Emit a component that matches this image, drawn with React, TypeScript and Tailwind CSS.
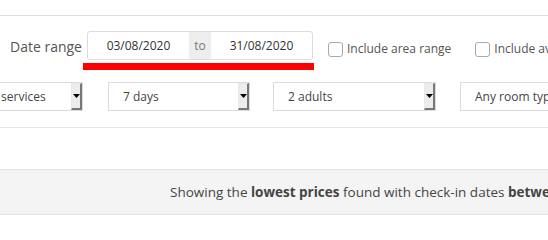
import React from "react";

const font = { fontFamily: '"Open Sans", "Liberation Sans", sans-serif' };

function SelectBox({ label, className }: { label: string; className: string }) {
    return (
        <div className={`flex h-[29px] shrink-0 items-stretch border border-[#dcdcdc] bg-white ${className}`}>
            <div className="flex min-w-0 flex-1 items-center overflow-hidden whitespace-nowrap pl-[14px] text-[12px] text-[#444]">
                {label}
            </div>
            <div className="flex w-[11px] shrink-0 items-center justify-center border-b-2 border-r-2 border-l border-t border-b-[#777] border-r-[#777] border-l-[#e8e8e8] border-t-[#e8e8e8] bg-[#ececec]">
                <svg width="7" height="4" viewBox="0 0 7 4">
                    <path d="M0 0h7L3.5 4z" fill="#000" />
                </svg>
            </div>
        </div>
    );
}

function Checkbox({ label }: { label: string }) {
    return (
        <label className="flex shrink-0 items-center whitespace-nowrap text-[12px] text-[#555]">
            <span className="mr-[4px] h-[15px] w-[15px] rounded-[3px] border border-[#aaa] bg-white" />
            {label}
        </label>
    );
}

export default function App() {
    return (
        <div className="h-[240px] w-[548px] overflow-hidden bg-white" style={font}>
            <div className="h-[16px] border-b border-[#dedede]" />

            {/* date range row */}
            <div className="flex items-start whitespace-nowrap pl-[10px] pt-[15px]">
                <span className="mt-[5px] shrink-0 text-[14px] text-[#555]">Date range</span>
                <div className="ml-[5px] flex shrink-0 flex-col">
                    <div className="flex h-[29px] w-[226px] overflow-hidden rounded-[3px] border border-[#dcdcdc] text-[12px] text-[#333]">
                        <div className="flex flex-1 items-center justify-center">03/08/2020</div>
                        <div className="flex w-[22px] items-center justify-center bg-[#eee] text-[#777]">to</div>
                        <div className="flex flex-1 items-center justify-center">31/08/2020</div>
                    </div>
                    <div className="-ml-[4px] mt-[3px] h-[7px] w-[231px] bg-[#ff0000]" />
                </div>
                <div className="ml-[14px] mt-[9px] flex shrink-0 gap-[24px]">
                    <Checkbox label="Include area range" />
                    <Checkbox label="Include availability" />
                </div>
            </div>

            {/* selects row */}
            <div className="mt-[12px] flex">
                <div className="-ml-[38px] flex shrink-0">
                    <SelectBox label="Any services" className="w-[121px]" />
                </div>
                <SelectBox label="7 days" className="ml-[25px] w-[142px]" />
                <SelectBox label="2 adults" className="ml-[23px] w-[163px]" />
                <SelectBox label="Any room type" className="ml-[24px] w-[160px]" />
            </div>

            <div className="mt-[16px] border-b border-[#e5e5e5]" />

            <div className="mt-[41px] flex h-[46px] items-center whitespace-nowrap border-y border-[#e2e2e2] bg-[#f4f4f4] pl-[170px] text-[13.5px] text-[#444]">
                Showing the&nbsp;<b>lowest prices</b>&nbsp;found with check-in dates&nbsp;<b>between</b>
            </div>
        </div>
    );
}
